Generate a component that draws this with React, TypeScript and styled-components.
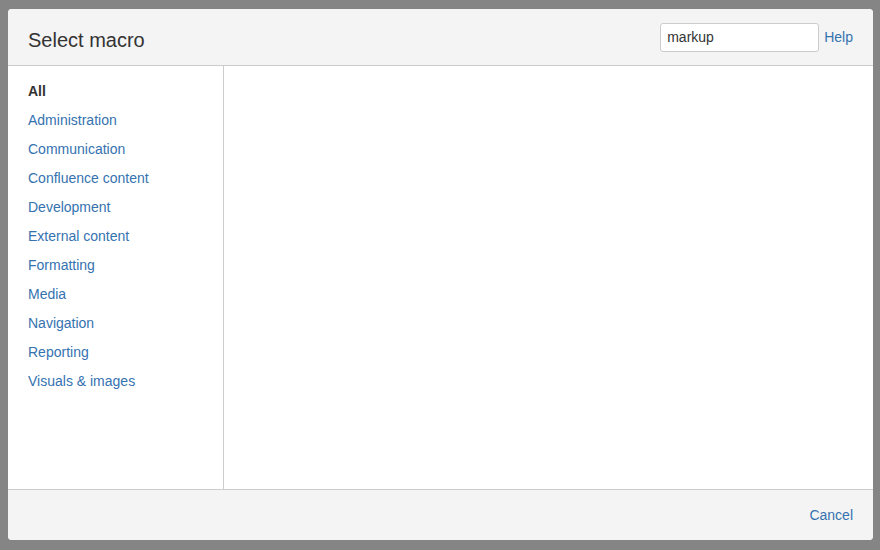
import styled, { createGlobalStyle } from 'styled-components';

const GlobalStyle = createGlobalStyle`
	html, body {
		margin: 0;
		padding: 0;
		height: 100%;
	}
	body {
		background-color: #858585;
		font-family: "Liberation Sans", Arial, sans-serif;
		color: #333;
	}
	#root {
		height: 100%;
	}
`

const Backdrop = styled.div`
	height: 550px;
	padding: 9px 7px 10px 8px;
	box-sizing: border-box;
`

const Dialog = styled.div`
	height: 100%;
	display: flex;
	flex-direction: column;
	background-color: #fff;
	border-radius: 4px;
	overflow: hidden;
`

const Header = styled.div`
	height: 56px;
	flex-shrink: 0;
	display: flex;
	align-items: center;
	padding: 0 20px;
	background-color: #f4f4f4;
	border-bottom: 1px solid #cccccc;
`

const Title = styled.h2`
	margin: 6px 0 0;
	flex: 1;
	font-size: 20px;
	font-weight: 400;
	color: #333;
`

const Search = styled.input`
	width: 159px;
	height: 29px;
	box-sizing: border-box;
	padding: 0 6px;
	border: 1px solid #cccccc;
	border-radius: 3px;
	font-family: inherit;
	font-size: 14px;
	color: #333;
	background: #fff;
	outline: none;
`

const Link = styled.a`
	color: #3572b0;
	font-size: 14px;
	text-decoration: none;
	cursor: pointer;
`

const HelpLink = styled(Link)`
	margin-left: 5px;
`

const Body = styled.div`
	flex: 1;
	display: flex;
	min-height: 0;
`

const Sidebar = styled.nav`
	width: 216px;
	flex-shrink: 0;
	border-right: 1px solid #cccccc;
	padding: 17px 0 0 20px;
	box-sizing: border-box;
	display: flex;
	flex-direction: column;
	gap: 13px;
`

const NavItem = styled(Link)<{ $active?: boolean }>`
	line-height: 16px;
	color: ${props => props.$active ? '#333' : '#3572b0'};
	font-weight: ${props => props.$active ? 700 : 400};
`

const Content = styled.div`
	flex: 1;
`

const Footer = styled.div`
	height: 50px;
	flex-shrink: 0;
	display: flex;
	align-items: center;
	justify-content: flex-end;
	padding: 0 20px;
	background-color: #f4f4f4;
	border-top: 1px solid #cccccc;
`

const categories = [
	'Administration',
	'Communication',
	'Confluence content',
	'Development',
	'External content',
	'Formatting',
	'Media',
	'Navigation',
	'Reporting',
	'Visuals & images',
]

function App() {
	return (
		<>
			<GlobalStyle />
			<Backdrop>
				<Dialog>
					<Header>
						<Title>Select macro</Title>
						<Search defaultValue="markup" />
						<HelpLink>Help</HelpLink>
					</Header>
					<Body>
						<Sidebar>
							<NavItem $active>All</NavItem>
							{categories.map(c => (
								<NavItem key={c}>{c}</NavItem>
							))}
						</Sidebar>
						<Content />
					</Body>
					<Footer>
						<Link>Cancel</Link>
					</Footer>
				</Dialog>
			</Backdrop>
		</>
	)
}

export default App;
